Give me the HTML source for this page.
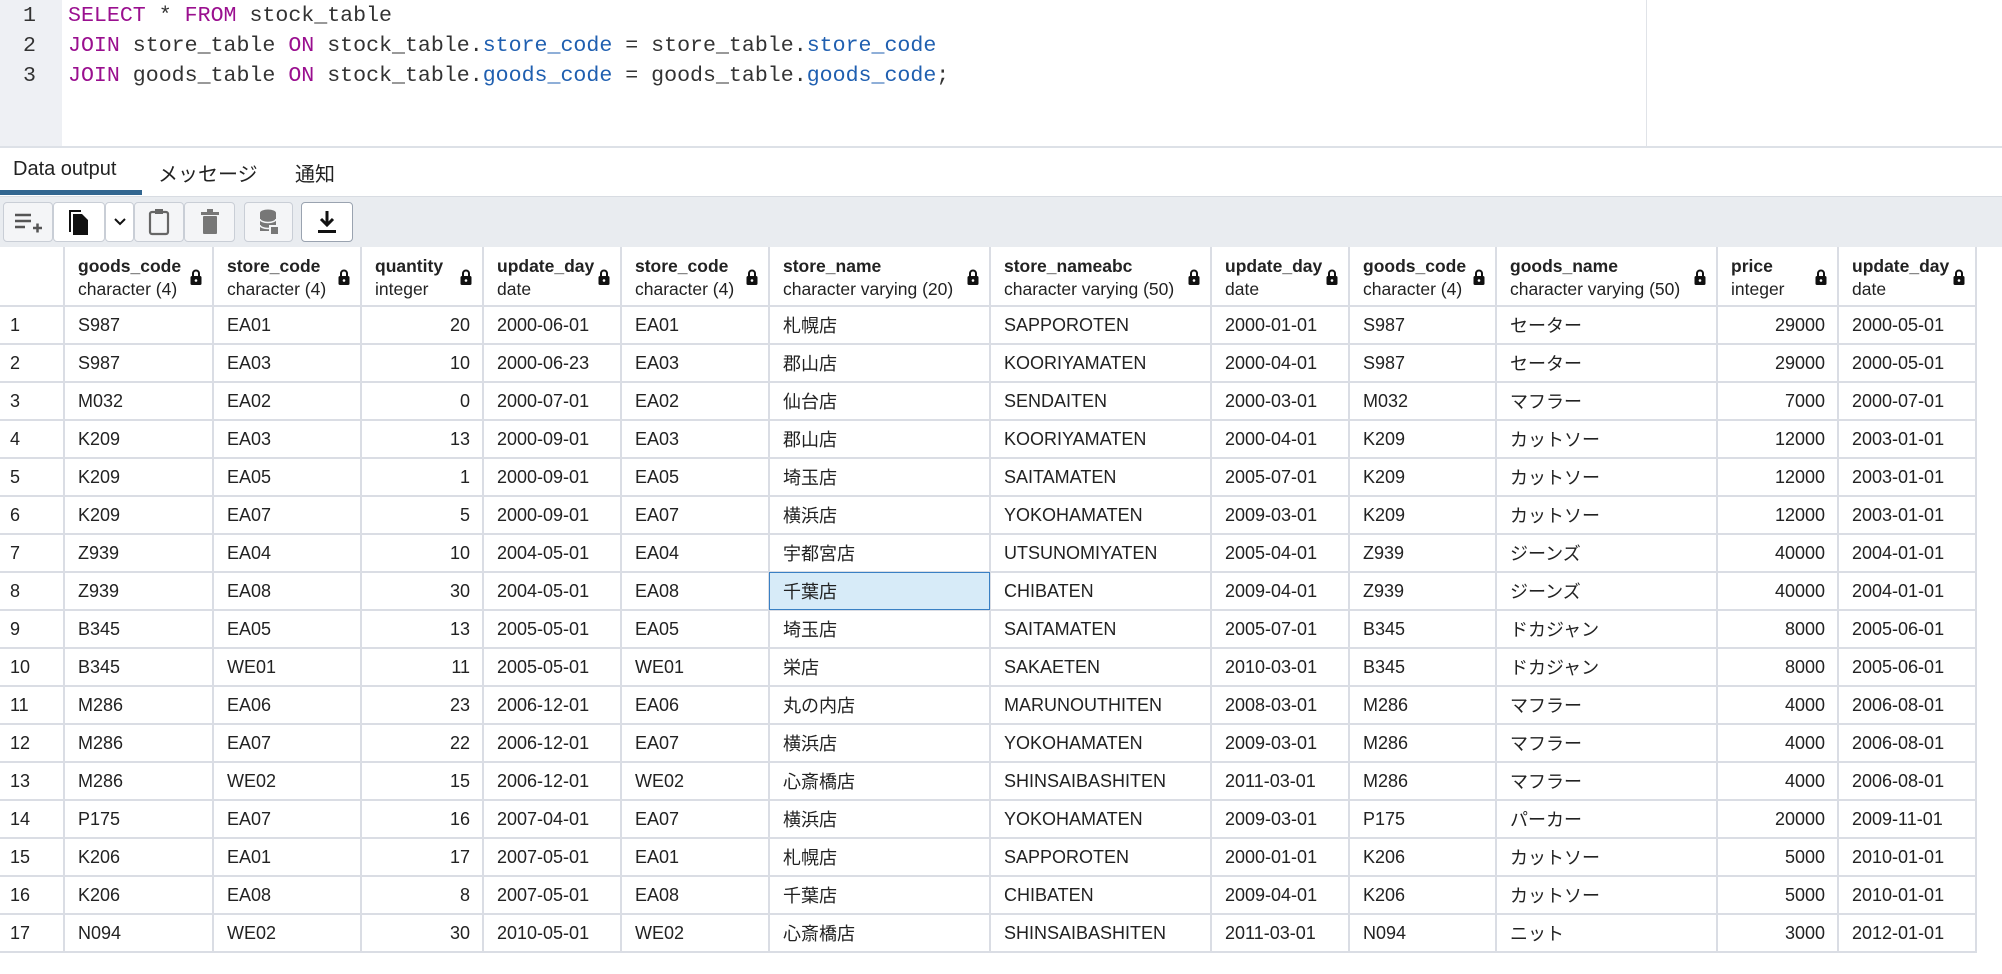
<!DOCTYPE html>
<html><head><meta charset="utf-8">
<style>
*{box-sizing:border-box;margin:0;padding:0}
body{width:2002px;height:974px;background:#fff;font-family:"Liberation Sans","Noto Sans CJK JP",sans-serif;color:#222;position:relative;overflow:hidden}
#ed{position:absolute;left:0;top:0;width:2002px;height:148px;background:#fff;border-bottom:2px solid #dde1e7}
#gut{position:absolute;left:0;top:0;width:62px;height:146px;background:#eef0f4}
#vl{position:absolute;left:1646px;top:0;width:1px;height:146px;background:#e0e3e8}
.ln{position:absolute;left:0;width:36px;text-align:right;font:21.6px "Liberation Mono",monospace;color:#333}
.code{position:absolute;left:68px;font:21.6px "Liberation Mono",monospace;color:#333;white-space:pre}
.k{color:#9a0f8f}.p{color:#1f5fb0}
#tabs{position:absolute;top:148px;left:0;width:2002px;height:48px;background:#fff}
.tab{position:absolute;top:10px;font-size:20px;color:#222}
#ul{position:absolute;left:0;top:190px;width:142px;height:5px;background:#326690}
#tb{position:absolute;top:196px;left:0;width:2002px;height:51px;background:#e9ecf0;border-top:1px solid #d8dce2}
.b{position:absolute;top:5px;height:40px;background:#f4f5f7;border:1px solid #c9ced6;border-radius:4px;display:flex;align-items:center;justify-content:center}
table{position:absolute;left:0;top:247px;border-collapse:collapse;table-layout:fixed;width:1976px;font-size:18px}
td,th{border:1px solid #dadde4;border-width:0 2px 2px 0;white-space:nowrap;overflow:hidden;padding:0 0 0 13px;text-align:left}
th{height:59px;font-weight:normal;position:relative;vertical-align:top}
th b{display:block;margin-top:9px;font-size:17.5px}
th span{display:block;font-size:17.5px;margin-top:2px}
th i{position:absolute;right:10px;top:22px;width:12px;height:16px}
td{height:38px}
td:first-child,th:first-child{padding-left:10px}
.r{text-align:right;padding:0 12px 0 0}
.sel{background:#d7ebf8;outline:1px solid #3a80c4;outline-offset:-1px}
</style></head><body>
<div id="ed"><div id="gut"></div><div id="vl"></div>
<div class="ln" style="top:4px">1</div><div class="ln" style="top:34px">2</div><div class="ln" style="top:64px">3</div>
<div class="code" style="top:4px"><span class="k">SELECT</span> * <span class="k">FROM</span> stock_table</div>
<div class="code" style="top:34px"><span class="k">JOIN</span> store_table <span class="k">ON</span> stock_table.<span class="p">store_code</span> = store_table.<span class="p">store_code</span></div>
<div class="code" style="top:64px"><span class="k">JOIN</span> goods_table <span class="k">ON</span> stock_table.<span class="p">goods_code</span> = goods_table.<span class="p">goods_code</span>;</div>
</div>
<div id="tabs"><div class="tab" style="left:13px">Data output</div><div class="tab" style="left:158px">メッセージ</div><div class="tab" style="left:295px">通知</div></div>
<div id="ul"></div>
<div id="tb">
<div class="b" style="left:3px;width:50px"><svg width="30" height="24" viewBox="0 0 30 24"><path d="M2 5h16M2 11h16M2 17h10M20 18h9M24.5 13.5v9" stroke="#555" stroke-width="2.5" fill="none"/></svg></div>
<div class="b" style="left:53px;width:52px;background:#fff"><svg width="24" height="28" viewBox="0 0 24 28"><path d="M2 2h12v2H4v20H2z" fill="#111"/><path d="M6 6h9l6 6v15H6z" fill="#111"/></svg></div>
<div class="b" style="left:105px;width:29px;background:#fff"><svg width="14" height="10"><path d="M2 2l5 5 5-5" stroke="#111" stroke-width="2" fill="none"/></svg></div>
<div class="b" style="left:134px;width:50px"><svg width="22" height="28" viewBox="0 0 22 28"><rect x="2" y="4" width="18" height="22" rx="2" fill="none" stroke="#666" stroke-width="2.2"/><rect x="7" y="1" width="8" height="5" fill="#666"/></svg></div>
<div class="b" style="left:184px;width:51px"><svg width="20" height="26" viewBox="0 0 20 26"><rect x="3" y="7" width="14" height="18" rx="1" fill="#777"/><rect x="1" y="3" width="18" height="3" fill="#777"/><rect x="7" y="0" width="6" height="3" fill="#777"/></svg></div>
<div class="b" style="left:244px;width:49px"><svg width="22" height="28" viewBox="0 0 22 28"><ellipse cx="10" cy="5" rx="8" ry="3.5" fill="#777"/><rect x="2" y="5" width="16" height="18" fill="#777"/><path d="M2 11a8 3.5 0 0 0 16 0M2 17a8 3.5 0 0 0 16 0" stroke="#f4f5f7" stroke-width="1.5" fill="none"/><rect x="11" y="17" width="10" height="10" fill="#f4f5f7"/><rect x="13" y="19" width="7" height="7" fill="#777"/></svg></div>
<div class="b" style="left:301px;width:52px;background:#fff;border-color:#9aa3b0"><svg width="22" height="26" viewBox="0 0 22 26"><path d="M11 2v13M5 10l6 6 6-6" stroke="#111" stroke-width="3" fill="none"/><rect x="2" y="21" width="18" height="3" fill="#111"/></svg></div>
</div>
<svg width="0" height="0" style="position:absolute"><defs><symbol id="lk" viewBox="0 0 12 16"><path d="M3 7V4.5a3 3 0 0 1 6 0V7" stroke="#111" stroke-width="2" fill="none"/><rect x="0.5" y="7" width="11" height="9" rx="1.5" fill="#111"/><circle cx="6" cy="11.5" r="1.3" fill="#fff"/></symbol></defs></svg>
<table>
<colgroup><col style="width:64px"><col style="width:149px"><col style="width:148px"><col style="width:122px"><col style="width:138px"><col style="width:148px"><col style="width:221px"><col style="width:221px"><col style="width:138px"><col style="width:147px"><col style="width:221px"><col style="width:121px"><col style="width:138px"></colgroup>
<tr><th></th>
<th><b>goods_code</b><span>character (4)</span><i><svg width="12" height="16"><use href="#lk"/></svg></i></th>
<th><b>store_code</b><span>character (4)</span><i><svg width="12" height="16"><use href="#lk"/></svg></i></th>
<th><b>quantity</b><span>integer</span><i><svg width="12" height="16"><use href="#lk"/></svg></i></th>
<th><b>update_day</b><span>date</span><i><svg width="12" height="16"><use href="#lk"/></svg></i></th>
<th><b>store_code</b><span>character (4)</span><i><svg width="12" height="16"><use href="#lk"/></svg></i></th>
<th><b>store_name</b><span>character varying (20)</span><i><svg width="12" height="16"><use href="#lk"/></svg></i></th>
<th><b>store_nameabc</b><span>character varying (50)</span><i><svg width="12" height="16"><use href="#lk"/></svg></i></th>
<th><b>update_day</b><span>date</span><i><svg width="12" height="16"><use href="#lk"/></svg></i></th>
<th><b>goods_code</b><span>character (4)</span><i><svg width="12" height="16"><use href="#lk"/></svg></i></th>
<th><b>goods_name</b><span>character varying (50)</span><i><svg width="12" height="16"><use href="#lk"/></svg></i></th>
<th><b>price</b><span>integer</span><i><svg width="12" height="16"><use href="#lk"/></svg></i></th>
<th><b>update_day</b><span>date</span><i><svg width="12" height="16"><use href="#lk"/></svg></i></th></tr>
<tr><td>1</td><td>S987</td><td>EA01</td><td class="r">20</td><td>2000-06-01</td><td>EA01</td><td>札幌店</td><td>SAPPOROTEN</td><td>2000-01-01</td><td>S987</td><td>セーター</td><td class="r">29000</td><td>2000-05-01</td></tr>
<tr><td>2</td><td>S987</td><td>EA03</td><td class="r">10</td><td>2000-06-23</td><td>EA03</td><td>郡山店</td><td>KOORIYAMATEN</td><td>2000-04-01</td><td>S987</td><td>セーター</td><td class="r">29000</td><td>2000-05-01</td></tr>
<tr><td>3</td><td>M032</td><td>EA02</td><td class="r">0</td><td>2000-07-01</td><td>EA02</td><td>仙台店</td><td>SENDAITEN</td><td>2000-03-01</td><td>M032</td><td>マフラー</td><td class="r">7000</td><td>2000-07-01</td></tr>
<tr><td>4</td><td>K209</td><td>EA03</td><td class="r">13</td><td>2000-09-01</td><td>EA03</td><td>郡山店</td><td>KOORIYAMATEN</td><td>2000-04-01</td><td>K209</td><td>カットソー</td><td class="r">12000</td><td>2003-01-01</td></tr>
<tr><td>5</td><td>K209</td><td>EA05</td><td class="r">1</td><td>2000-09-01</td><td>EA05</td><td>埼玉店</td><td>SAITAMATEN</td><td>2005-07-01</td><td>K209</td><td>カットソー</td><td class="r">12000</td><td>2003-01-01</td></tr>
<tr><td>6</td><td>K209</td><td>EA07</td><td class="r">5</td><td>2000-09-01</td><td>EA07</td><td>横浜店</td><td>YOKOHAMATEN</td><td>2009-03-01</td><td>K209</td><td>カットソー</td><td class="r">12000</td><td>2003-01-01</td></tr>
<tr><td>7</td><td>Z939</td><td>EA04</td><td class="r">10</td><td>2004-05-01</td><td>EA04</td><td>宇都宮店</td><td>UTSUNOMIYATEN</td><td>2005-04-01</td><td>Z939</td><td>ジーンズ</td><td class="r">40000</td><td>2004-01-01</td></tr>
<tr><td>8</td><td>Z939</td><td>EA08</td><td class="r">30</td><td>2004-05-01</td><td>EA08</td><td class="sel">千葉店</td><td>CHIBATEN</td><td>2009-04-01</td><td>Z939</td><td>ジーンズ</td><td class="r">40000</td><td>2004-01-01</td></tr>
<tr><td>9</td><td>B345</td><td>EA05</td><td class="r">13</td><td>2005-05-01</td><td>EA05</td><td>埼玉店</td><td>SAITAMATEN</td><td>2005-07-01</td><td>B345</td><td>ドカジャン</td><td class="r">8000</td><td>2005-06-01</td></tr>
<tr><td>10</td><td>B345</td><td>WE01</td><td class="r">11</td><td>2005-05-01</td><td>WE01</td><td>栄店</td><td>SAKAETEN</td><td>2010-03-01</td><td>B345</td><td>ドカジャン</td><td class="r">8000</td><td>2005-06-01</td></tr>
<tr><td>11</td><td>M286</td><td>EA06</td><td class="r">23</td><td>2006-12-01</td><td>EA06</td><td>丸の内店</td><td>MARUNOUTHITEN</td><td>2008-03-01</td><td>M286</td><td>マフラー</td><td class="r">4000</td><td>2006-08-01</td></tr>
<tr><td>12</td><td>M286</td><td>EA07</td><td class="r">22</td><td>2006-12-01</td><td>EA07</td><td>横浜店</td><td>YOKOHAMATEN</td><td>2009-03-01</td><td>M286</td><td>マフラー</td><td class="r">4000</td><td>2006-08-01</td></tr>
<tr><td>13</td><td>M286</td><td>WE02</td><td class="r">15</td><td>2006-12-01</td><td>WE02</td><td>心斎橋店</td><td>SHINSAIBASHITEN</td><td>2011-03-01</td><td>M286</td><td>マフラー</td><td class="r">4000</td><td>2006-08-01</td></tr>
<tr><td>14</td><td>P175</td><td>EA07</td><td class="r">16</td><td>2007-04-01</td><td>EA07</td><td>横浜店</td><td>YOKOHAMATEN</td><td>2009-03-01</td><td>P175</td><td>パーカー</td><td class="r">20000</td><td>2009-11-01</td></tr>
<tr><td>15</td><td>K206</td><td>EA01</td><td class="r">17</td><td>2007-05-01</td><td>EA01</td><td>札幌店</td><td>SAPPOROTEN</td><td>2000-01-01</td><td>K206</td><td>カットソー</td><td class="r">5000</td><td>2010-01-01</td></tr>
<tr><td>16</td><td>K206</td><td>EA08</td><td class="r">8</td><td>2007-05-01</td><td>EA08</td><td>千葉店</td><td>CHIBATEN</td><td>2009-04-01</td><td>K206</td><td>カットソー</td><td class="r">5000</td><td>2010-01-01</td></tr>
<tr><td>17</td><td>N094</td><td>WE02</td><td class="r">30</td><td>2010-05-01</td><td>WE02</td><td>心斎橋店</td><td>SHINSAIBASHITEN</td><td>2011-03-01</td><td>N094</td><td>ニット</td><td class="r">3000</td><td>2012-01-01</td></tr>
</table>
</body></html>
